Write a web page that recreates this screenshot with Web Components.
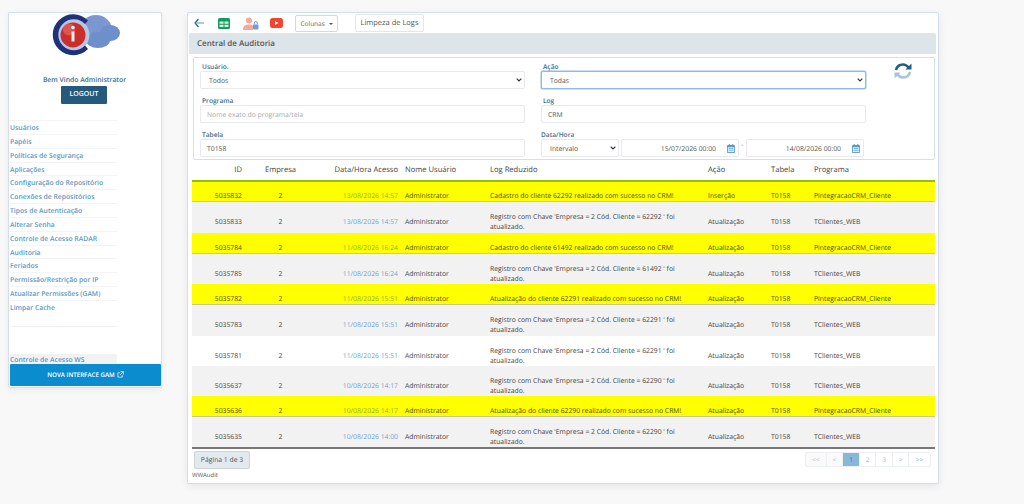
<!DOCTYPE html>
<html lang="pt">
<head>
<meta charset="utf-8">
<title>Central de Auditoria</title>
<style>
html,body{margin:0;height:504px;overflow:hidden;background:#f8f8f8;font-family:"Open Sans",sans-serif;text-rendering:geometricPrecision;}
body{display:flex;align-items:flex-start;gap:25px;padding:12px 0 0 8px;box-sizing:border-box;}
</style>
</head>
<body>
<audit-sidebar></audit-sidebar>
<audit-main></audit-main>

<script>
class AuditSidebar extends HTMLElement {
	constructor() {
		super();
		const items=['Usuários','Papéis','Políticas de Segurança','Aplicações','Configuração do Repositório','Conexões de Repositórios','Tipos de Autenticação','Alterar Senha','Controle de Acesso RADAR','Auditoria','Feriados','Permissão/Restrição por IP','Atualizar Permissões (GAM)','Limpar Cache'];
		this.attachShadow({mode:'open'}).innerHTML=`
		<style>
			:host{display:flex;flex-direction:column;flex:none;box-sizing:border-box;width:154px;height:376px;background:#fff;border:1px solid #d3deee;border-radius:2px;box-shadow:0 2px 6px rgba(0,0,0,.06);padding:1px 0 0 1px;}
			:host>*{flex:none;}
			.logo{display:block;margin-left:40px;flex:none;}
			.hello{margin-top:17px;height:10px;text-align:center;font-size:6.8px;line-height:10px;font-weight:600;color:#3d6c8f;padding-right:2px;}
			.logout{align-self:flex-start;margin:1px 0 0 51px;width:46px;height:18px;background:#265a7c;color:#fff;font-size:7px;font-weight:600;line-height:18px;text-align:center;border-radius:1px;}
			nav{width:107px;margin-top:16px;}
			nav a{display:block;box-sizing:border-box;height:13.85px;line-height:13px;border-top:1px solid #f2f4f6;font-size:6.8px;font-weight:600;color:#5b97c4;}
			.blank{height:12px;}
			.line{height:28px;box-sizing:border-box;border-top:1px solid #eef0f2;}
			.ws{width:107px;height:10px;line-height:11px;background:#f2f2f2;font-size:6.8px;font-weight:600;color:#5b97c4;}
			.gam{width:151px;height:22px;background:#0a8ccf;color:#fff;font-size:6.2px;font-weight:600;display:flex;align-items:center;justify-content:center;gap:2px;border-radius:1px;}
		</style>
		<svg class="logo" width="72" height="44" viewBox="0 0 72 44">
			<ellipse cx="46" cy="16" rx="16" ry="15" fill="#7c97d0"/>
			<ellipse cx="60" cy="19" rx="10" ry="8" fill="#6f8fcb"/>
			<ellipse cx="48" cy="26" rx="12" ry="8" fill="#6f8fcb"/>
			<circle cx="23" cy="21" r="16.500" fill="#b8c6e6"/>
			<path d="M38 6.500A20.500 20.500 0 1 0 38 35l-3-3.500A15.500 15.500 0 1 1 35 10z" fill="#1e3179"/>
			<circle cx="23" cy="21" r="12.500" fill="#c9302c"/>
			<circle cx="19" cy="15.500" r="6" fill="#e4706b" opacity=".6"/>
			<rect x="21.500" y="17.500" width="3" height="10" fill="#f4e8e8"/>
			<circle cx="23" cy="13.500" r="1.800" fill="#f4e8e8"/>
		</svg>
		<div class="hello">Bem Vindo Administrator</div>
		<div class="logout">LOGOUT</div>
		<nav>
			${items.map(i=>`<a>${i}</a>`).join('')}
			<div class="blank"></div>
			<div class="line"></div>
		</nav>
		<div class="ws">Controle de Acesso WS</div>
		<div class="gam">NOVA INTERFACE GAM
			<svg width="7" height="7" viewBox="0 0 8 8" fill="none" stroke="#fff" stroke-width=".8"><path d="M6 4.500V7H1V2h2.500M4 .7h3.300V4M7.200.8 3.500 4.500"/></svg>
		</div>`;
	}
}
customElements.define('audit-sidebar',AuditSidebar);

class AuditToolbar extends HTMLElement {
	constructor() {
		super();
		this.attachShadow({mode:'open'}).innerHTML=`
		<style>
			:host{display:flex;align-items:center;height:20px;padding-left:5px;box-sizing:border-box;font-size:7.5px;color:#555;}
			svg{display:block;flex:none;}
			.cols{margin-left:12px;width:43px;height:17px;border:1px solid #cfd9e8;border-radius:2px;box-sizing:border-box;font-size:6.5px;line-height:15px;text-align:center;color:#666;background:#fff;}
			.cols i{display:inline-block;border:2px solid transparent;border-top:2.500px solid #555;border-bottom:0;vertical-align:1px;margin-left:2px;}
			.clean{margin-left:17px;width:69px;height:18px;border:1px solid #e4e6ea;border-radius:2px;box-sizing:border-box;line-height:16px;text-align:center;background:#fff;color:#555;}
		</style>
		<svg width="10" height="10" viewBox="0 0 10 10" fill="none" stroke="#1f5f86" stroke-width="1.200"><path d="M4.500 1 1 5l3.500 4"/><path d="M1.500 5H10" stroke="#6fa8cc"/></svg>
		<svg style="margin-left:14px" width="12" height="11" viewBox="0 0 12 11"><rect width="12" height="11" rx="1.500" fill="#129c5a"/><path d="M1.500 3.500h4v2.300h-4zM6.500 3.500h4v2.300h-4zM1.500 6.700h4V9h-4zM6.500 6.700h4V9h-4z" fill="#d8f3e4"/></svg>
		<svg style="margin-left:13px" width="16" height="13" viewBox="0 0 16 13"><circle cx="6" cy="3.500" r="3" fill="#f4a79d"/><path d="M0 13c0-4 2-5.500 6-5.500 2 0 3.500.5 4 1.500v4z" fill="#f4a79d"/><rect x="10" y="7.500" width="5.500" height="5" rx=".8" fill="#6f9fd0"/><path d="M11.300 7.500V6a1.500 1.500 0 0 1 3 0v1.500" fill="none" stroke="#6f9fd0"/></svg>
		<svg style="margin-left:11px" width="13" height="10" viewBox="0 0 13 10"><rect width="13" height="10" rx="2.500" fill="#f4442e"/><path d="m5 3 3.500 2L5 7z" fill="#fff"/></svg>
		<div class="cols">Colunas <i></i></div>
		<div class="clean">Limpeza de Logs</div>`;
	}
}
customElements.define('audit-toolbar',AuditToolbar);

class AuditField extends HTMLElement {
	constructor() {
		super();
		this.attachShadow({mode:'open'}).innerHTML=`
		<style>
			:host{display:block;font-size:6.6px;}
			label{display:block;height:9px;line-height:9px;font-weight:600;color:#3d6c8f;padding-left:2px;}
			:host([flush]) label{padding-left:0;}
		</style>
		<label></label>
		<div><slot></slot></div>`;
	}
	connectedCallback() {
		this.shadowRoot.querySelector('label').textContent=this.getAttribute('label');
	}
}
customElements.define('audit-field',AuditField);

class AuditInput extends HTMLElement {
	constructor() {
		super();
		this.attachShadow({mode:'open'}).innerHTML=`
		<style>
			:host{display:flex;align-items:center;box-sizing:border-box;height:18px;background:#fff;border:1px solid #e6e9ee;border-radius:2px;font-size:6.8px;color:#555;padding:0 6px;}
			:host([focus]){border-color:#8fbbe6;box-shadow:0 0 0 .5px #8fbbe6;}
			:host([placeholder]){color:#aaa;}
			:host([select]){padding-left:8px;}
			:host([date]){justify-content:flex-end;padding-right:3px;gap:11px;}
			.text{flex:1;}
			:host([date]) .text{flex:none;}
			svg{display:none;flex:none;}
			:host([select]) .chev{display:block;margin-right:-4px;}
			:host([date]) .cal{display:block;}
		</style>
		<span class="text"><slot></slot></span>
		<svg class="chev" width="6" height="4" viewBox="0 0 6 4" fill="none" stroke="#333" stroke-width="1.200"><path d="m.7.7 2.300 2.300L5.300.7"/></svg>
		<svg class="cal" width="8" height="9" viewBox="0 0 9 10"><rect y="1" width="9" height="9" rx="1" fill="#5aa0d6"/><rect x="1" y="3.500" width="7" height="5.500" fill="#dcecf8"/><rect x="2" y="0" width="1" height="2" fill="#3b7fb5"/><rect x="6" y="0" width="1" height="2" fill="#3b7fb5"/><path d="M2 5h5M2 7h5" stroke="#5aa0d6" stroke-width=".8"/></svg>`;
	}
}
customElements.define('audit-input',AuditInput);

class AuditFilters extends HTMLElement {
	constructor() {
		super();
		this.attachShadow({mode:'open'}).innerHTML=`
		<style>
			:host{display:grid;grid-template-columns:325px 325px 1fr;column-gap:16px;row-gap:7px;box-sizing:border-box;height:103px;margin:3px 3px 0 4px;padding:4px 6px 0 6px;background:#fff;border:1px solid #d3deee;border-radius:2px;align-content:start;}
			.dates{display:flex;align-items:center;}
			.dash{width:7px;text-align:center;font-size:7px;color:#777;margin-top:-6px;}
			.refresh{grid-column:3;grid-row:1;margin:0 0 0 12px;}
			.left{grid-column:1;}
			.right{grid-column:2;}
		</style>
		<audit-field class="left" label="Usuário."><audit-input select>Todos</audit-input></audit-field>
		<audit-field class="right" label="Ação"><audit-input select focus>Todas</audit-input></audit-field>
		<svg class="refresh" width="18" height="18" viewBox="0 0 18 18" fill="none" stroke-width="2.600">
			<path d="M2 8C3 4 6 2.500 9 2.500c2.500 0 4 1 5.500 3" stroke="#1f5f86"/><path d="M17.500 1.500v6h-6z" fill="#1f5f86"/>
			<path d="M16 10c-1 4-4 5.500-7 5.500-2.500 0-4-1-5.500-3" stroke="#a9c3d6"/><path d="M.5 16.500v-6h6z" fill="#a9c3d6"/>
		</svg>
		<audit-field class="left" label="Programa"><audit-input placeholder>Nome exato do programa/tela</audit-input></audit-field>
		<audit-field class="right" label="Log"><audit-input>CRM</audit-input></audit-field>
		<audit-field class="left" label="Tabela"><audit-input>T0158</audit-input></audit-field>
		<audit-field class="right" flush label="Data/Hora">
			<div class="dates">
				<audit-input select style="width:78px;margin-right:2px">Intervalo</audit-input>
				<audit-input date style="width:118px">15/07/2026 00:00</audit-input>
				<span class="dash">-</span>
				<audit-input date style="width:118px">14/08/2026 00:00</audit-input>
			</div>
		</audit-field>`;
	}
}
customElements.define('audit-filters',AuditFilters);

class AuditTable extends HTMLElement {
	constructor() {
		super();
		const cad=(n)=>`Cadastro do cliente ${n} realizado com sucesso no CRM!`;
		const atu=(n)=>`Atualização do cliente ${n} realizado com sucesso no CRM!`;
		const reg=(n)=>`Registro com Chave 'Empresa = 2 Cód. Cliente = ${n} ' foi atualizado.`;
		const rows=[
			['y',20,'5035832','13/08/2026 14:57',cad(62292),'Inserção','PintegracaoCRM_Cliente'],
			['g',31,'5035833','13/08/2026 14:57',reg(62292),'Atualização','TClientes_WEB'],
			['y',21,'5035784','11/08/2026 16:24',cad(61492),'Atualização','PintegracaoCRM_Cliente'],
			['g',30,'5035785','11/08/2026 16:24',reg(61492),'Atualização','TClientes_WEB'],
			['y',21,'5035782','11/08/2026 15:51',atu(62291),'Atualização','PintegracaoCRM_Cliente'],
			['g',31,'5035783','11/08/2026 15:51',reg(62291),'Atualização','TClientes_WEB'],
			['w',30,'5035781','11/08/2026 15:51',reg(62291),'Atualização','TClientes_WEB'],
			['g',30,'5035637','10/08/2026 14:17',reg(62290),'Atualização','TClientes_WEB'],
			['y',21,'5035636','10/08/2026 14:17',atu(62290),'Atualização','PintegracaoCRM_Cliente'],
			['g',32,'5035635','10/08/2026 14:00',reg(62290),'Atualização','TClientes_WEB'],
		];
		this.attachShadow({mode:'open'}).innerHTML=`
		<style>
			:host{display:block;margin:0 3px;font-size:6.8px;color:#444;}
			table{border-collapse:separate;border-spacing:0;table-layout:fixed;width:743px;}
			th{height:20px;font-weight:400;padding:0;text-align:left;color:#444;font-size:7.6px;border-bottom:2px solid #93c000;}
			td{padding:9px 0 0;vertical-align:middle;line-height:10px;box-sizing:border-box;}
			.r{text-align:right;}
			.c{text-align:center;}
			tr.y td{background:#ffff00;color:#4f4f00;border-bottom:1px solid #c9c98a;}
			tr.g td{background:#f2f2f2;}
			tr.w td{background:#fff;}
			td.date{color:#6ea5d2;}
			tr.y td.date{color:#8fb52e;}
			.log{padding-right:24px;}
			tr:last-child td{border-bottom:2px solid #777;}
		</style>
		<table>
			<colgroup><col style="width:50px"><col style="width:77px"><col style="width:79px"><col style="width:7px"><col style="width:85px"><col style="width:218px"><col style="width:63px"><col style="width:43px"><col style="width:121px"></colgroup>
			<thead><tr><th class="r">ID</th><th class="c">Empresa</th><th class="r">Data/Hora Acesso</th><th></th><th>Nome Usuário</th><th>Log Reduzido</th><th>Ação</th><th>Tabela</th><th>Programa</th></tr></thead>
			<tbody>
			${rows.map(r=>`<tr class="${r[0]}" style="height:${r[1]}px"><td class="r">${r[2]}</td><td class="c">2</td><td class="r date">${r[3]}</td><td></td><td>Administrator</td><td class="log">${r[4]}</td><td>${r[5]}</td><td>T0158</td><td>${r[6]}</td></tr>`).join('')}
			</tbody>
		</table>`;
	}
}
customElements.define('audit-table',AuditTable);

class AuditPager extends HTMLElement {
	constructor() {
		super();
		const pages=['<<','<','1','2','3','>','>>'];
		const widths=[21,16,17,16,17,16,21];
		this.attachShadow({mode:'open'}).innerHTML=`
		<style>
			:host{display:flex;justify-content:space-between;align-items:flex-start;height:18px;margin-top:2px;padding:0 7px 0 5px;}
			.info{width:56px;height:18px;box-sizing:border-box;background:#e4e9ed;border:1px solid #ccd3d9;border-radius:2px;font-size:6.8px;line-height:16px;text-align:center;color:#555;}
			.pages{display:flex;height:15px;margin-top:1px;box-sizing:border-box;border:1px solid #eceff2;border-radius:2px;}
			.pages span{display:block;font-size:6.5px;line-height:13px;text-align:center;color:#9bbcd6;border-right:1px solid #eceff2;box-sizing:border-box;}
			.pages span:last-child{border-right:0;}
			.pages .on{background:#88b8d8;color:#3f7da8;}
			.pages .off{color:#b9c6d0;background:#fafafa;}
		</style>
		<div class="info">Página 1 de 3</div>
		<div class="pages">${pages.map((p,i)=>`<span class="${p==='1'?'on':(i<2?'off':'')}" style="width:${widths[i]}px">${p.replace(/</g,'&lt;').replace(/>/g,'&gt;')}</span>`).join('')}</div>`;
	}
}
customElements.define('audit-pager',AuditPager);

class AuditMain extends HTMLElement {
	constructor() {
		super();
		this.attachShadow({mode:'open'}).innerHTML=`
		<style>
			:host{display:block;flex:none;box-sizing:border-box;width:752px;height:472px;background:#fff;border:1px solid #d3deee;border-radius:2px;box-shadow:0 3px 8px rgba(0,0,0,.07);padding-left:1px;}
			.title{height:21px;margin-right:2px;background:#dde4ea;border-radius:2px 2px 0 0;font-size:8px;font-weight:600;line-height:22px;color:#555;padding-left:8px;}
			.foot{font-size:6px;color:#555;padding-left:3px;margin-top:2px;line-height:8px;}
		</style>
		<audit-toolbar></audit-toolbar>
		<div class="title">Central de Auditoria</div>
		<audit-filters></audit-filters>
		<audit-table></audit-table>
		<audit-pager></audit-pager>
		<div class="foot">WWAudit</div>`;
	}
}
customElements.define('audit-main',AuditMain);
</script>
</body>
</html>
